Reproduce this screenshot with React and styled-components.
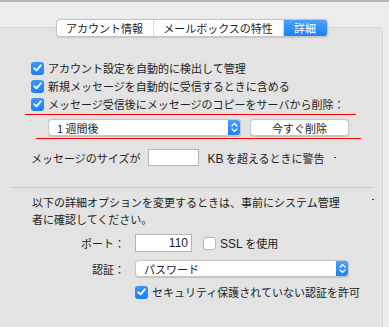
import React from "react";
import styled, { createGlobalStyle } from "styled-components";

const GlobalStyle = createGlobalStyle`
  html, body {
    margin: 0;
    padding: 0;
    background: #ececec;
  }
  body {
    font-family: "Noto Sans CJK JP", "Liberation Sans", sans-serif;
    font-size: 11px;
    color: #222;
  }
`;

const Window = styled.div`
  width: 389px;
  height: 327px;
  overflow: hidden;
  background: #ececec;
  border-top: 2px solid #b9b9b9;
  box-sizing: border-box;
`;

const TabBar = styled.div`
  position: relative;
  z-index: 1;
  width: 383px;
  display: flex;
  justify-content: center;
  padding-top: 17px;
`;

const Tabs = styled.div`
  display: flex;
  height: 18px;
  border: 1px solid #c4c4c4;
  border-radius: 4px;
  background: #fff;
  overflow: hidden;
  box-shadow: 0 0.5px 1px rgba(0, 0, 0, 0.12);
  box-sizing: border-box;
`;

const Tab = styled.div`
  width: ${(p) => p.w}px;
  display: flex;
  align-items: center;
  justify-content: center;
  line-height: 1;
  border-left: ${(p) => (p.first ? "none" : "1px solid #d9d9d9")};
  color: ${(p) => (p.active ? "#fff" : "#222")};
  background: ${(p) =>
    p.active ? "linear-gradient(#4ea1fc, #1b7ef6)" : "transparent"};
  box-sizing: border-box;
`;

const Panel = styled.div`
  margin-top: -10px;
  width: 383px;
  height: 310px;
  background: #e3e3e3;
  border: 1px solid #d6d6d6;
  border-left: none;
  border-bottom: none;
  border-top-right-radius: 5px;
  box-sizing: border-box;
  padding-top: 31px;
`;

const CheckRow = styled.label`
  display: flex;
  align-items: center;
  gap: 4px;
  height: 18px;
  margin-left: ${(p) => p.indent}px;
  white-space: nowrap;
`;

const Box = styled.span`
  width: 13px;
  height: 13px;
  flex: none;
  border-radius: 3px;
  box-sizing: border-box;
  display: flex;
  align-items: center;
  justify-content: center;
  background: ${(p) => (p.checked ? "linear-gradient(#3a95fc, #1a80fb)" : "#fff")};
  border: ${(p) => (p.checked ? "none" : "1px solid #b5b5b5")};
`;

const RedLine = styled.div`
  height: 1px;
  background: #ff0000;
  margin-top: ${(p) => p.top}px;
  margin-left: ${(p) => p.left}px;
  width: ${(p) => p.w}px;
`;

const Row = styled.div`
  display: flex;
  align-items: center;
  margin-top: ${(p) => p.top}px;
  margin-left: ${(p) => p.left}px;
  gap: ${(p) => p.gap || 0}px;
  white-space: nowrap;
`;

const Popup = styled.div`
  position: relative;
  width: ${(p) => p.w}px;
  height: 17px;
  background: #fff;
  border: 1px solid #c6c6c6;
  border-radius: 4px;
  box-shadow: 0 0.5px 1px rgba(0, 0, 0, 0.15);
  box-sizing: border-box;
  display: flex;
  align-items: center;
  padding-left: 8px;
  overflow: hidden;
`;

const PopupArrow = styled.span`
  position: absolute;
  right: -1px;
  top: -1px;
  bottom: -1px;
  width: 13px;
  background: linear-gradient(#4ea1fc, #1b7ef6);
  border-radius: 0 4px 4px 0;
  display: flex;
  align-items: center;
  justify-content: center;
`;

const Button = styled.div`
  width: 99px;
  height: 17px;
  background: #fff;
  border: 1px solid #c6c6c6;
  border-radius: 4px;
  box-shadow: 0 0.5px 1px rgba(0, 0, 0, 0.15);
  box-sizing: border-box;
  display: flex;
  align-items: center;
  justify-content: center;
`;

const Field = styled.div`
  width: ${(p) => p.w}px;
  height: ${(p) => p.h || 17}px;
  background: #fff;
  border: 1px solid #b4b4b4;
  box-sizing: border-box;
  display: flex;
  align-items: center;
  justify-content: flex-end;
  padding-right: 3px;
  font-family: "Liberation Sans", sans-serif;
  font-size: 12px;
`;

const RedDot = styled.span`
  width: 2px;
  height: 1px;
  background: #e00;
  margin-left: ${(p) => p.left}px;
`;

const Separator = styled.div`
  height: 1px;
  background: #c9c9c9;
  margin: 21px 0 0 11px;
  width: 362px;
`;

const Note = styled.div`
  display: flex;
  align-items: flex-start;
  margin: 6px 0 0 32px;
  line-height: 17px;
`;

const FormGrid = styled.div`
  display: grid;
  grid-template-columns: 125px auto;
  column-gap: 10px;
  align-items: center;
  margin-top: ${(p) => p.top}px;
`;

const Label = styled.span`
  text-align: right;
  white-space: nowrap;
`;

const Latin = styled.span`
  font-family: "Liberation Sans", sans-serif;
  font-size: 12px;
`;

const Check = () => (
  <svg width="9" height="8" viewBox="0 0 9 8">
    <path d="M1.2 4.2 L3.5 6.4 L7.8 1.3" fill="none" stroke="#fff" strokeWidth="1.8" strokeLinecap="round" strokeLinejoin="round" />
  </svg>
);

const UpDown = () => (
  <svg width="7" height="11" viewBox="0 0 7 11">
    <path d="M1 4 L3.5 1.5 L6 4 M1 7 L3.5 9.5 L6 7" fill="none" stroke="#fff" strokeWidth="1.2" strokeLinecap="round" strokeLinejoin="round" />
  </svg>
);

const CheckItem = ({ checked = true, indent, children }) => (
  <CheckRow indent={indent}>
    <Box checked={checked}>{checked && <Check />}</Box>
    <span>{children}</span>
  </CheckRow>
);

export default function App() {
  return (
    <Window>
      <GlobalStyle />
      <TabBar>
        <Tabs>
          <Tab w={96} first>アカウント情報</Tab>
          <Tab w={130}>メールボックスの特性</Tab>
          <Tab w={44} active>詳細</Tab>
        </Tabs>
      </TabBar>
      <Panel>
        <CheckItem indent={31}>アカウント設定を自動的に検出して管理</CheckItem>
        <CheckItem indent={31}>新規メッセージを自動的に受信するときに含める</CheckItem>
        <CheckItem indent={31}>メッセージ受信後にメッセージのコピーをサーバから削除：</CheckItem>
        <RedLine top={1} left={25} w={331} />
        <Row top={4} left={48} gap={9}>
          <Popup w={193}>
            1 週間後
            <PopupArrow>
              <UpDown />
            </PopupArrow>
          </Popup>
          <Button>今すぐ削除</Button>
        </Row>
        <RedLine top={2} left={36} w={325} />
        <Row top={10} left={31} gap={8}>
          <span>メッセージのサイズが</span>
          <Field w={51} />
          <span>
            <Latin>KB</Latin> を超えるときに警告
          </span>
          <RedDot left={1} />
        </Row>
        <Separator />
        <Note>
          <span>
            以下の詳細オプションを変更するときは、事前にシステム管理
            <br />
            者に確認してください。
          </span>
          <RedDot left={32} style={{ marginTop: 5 }} />
        </Note>
        <FormGrid top={6}>
          <Label>ポート：</Label>
          <Row top={0} left={0} gap={11}>
            <Field w={57} h={18}>110</Field>
            <CheckItem checked={false} indent={0}>
              <Latin>SSL</Latin> を使用
            </CheckItem>
          </Row>
        </FormGrid>
        <FormGrid top={8}>
          <Label>認証：</Label>
          <Popup w={214}>
            パスワード
            <PopupArrow>
              <UpDown />
            </PopupArrow>
          </Popup>
        </FormGrid>
        <FormGrid top={6}>
          <span />
          <CheckItem indent={0}>セキュリティ保護されていない認証を許可</CheckItem>
        </FormGrid>
      </Panel>
    </Window>
  );
}
